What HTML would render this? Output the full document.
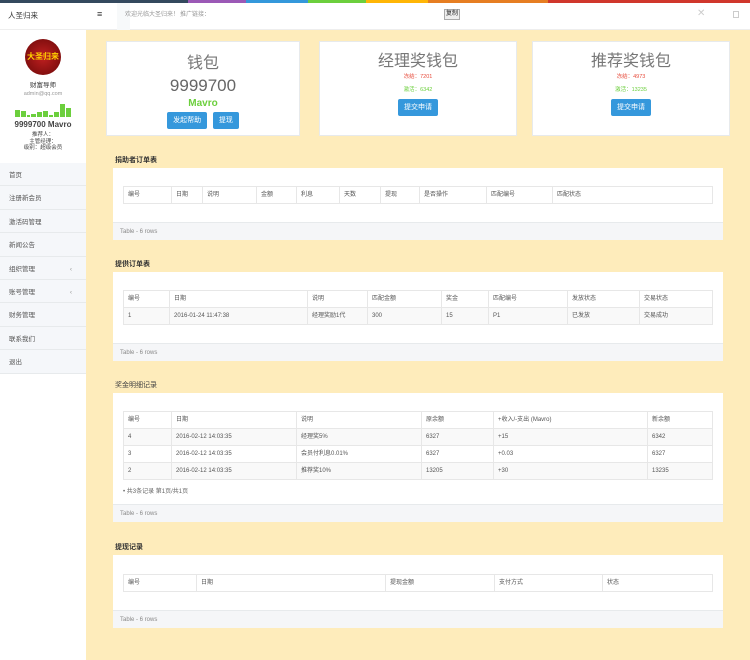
<!DOCTYPE html>
<html><head><meta charset="utf-8">
<style>
*{box-sizing:border-box;margin:0;padding:0}
body{width:750px;height:660px;overflow:hidden;background:#feecbb;font-family:"Liberation Sans","Noto Sans CJK SC",sans-serif;font-size:7px;color:#676a6c;position:relative}
.a{position:absolute}
.bar{top:0;left:0;width:750px;height:3px;display:flex}
.bar div{height:3px}
.card{background:#fff;border:1px solid #e7eaec;text-align:center}
.title{font-size:16px;line-height:18px;color:#777;font-family:"Liberation Sans","Noto Sans CJK SC",sans-serif}
.btn{display:inline-block;background:#3598dc;color:#fff;font-size:7px;line-height:9px;padding:4px 6px;border-radius:2px}
.sec{font-size:7px;font-weight:bold;color:#333;left:115px}
.panel{left:113px;width:610px;background:#fff}
.foot{position:absolute;left:0;bottom:0;width:100%;height:18px;background:#f5f6f8;border-top:1px solid #e7eaec;font-size:6px;color:#888;padding:6px 7px;line-height:7px}
table{position:absolute;left:10px;width:590px;border-collapse:collapse;table-layout:fixed;border:1px solid #e0e0e0}
td,th{border:1px solid #e7e7e7;height:17px;font-size:6px;line-height:7px;font-weight:normal;text-align:left;padding:5px 0 0 4px;color:#555;vertical-align:top;white-space:nowrap;overflow:hidden}
tr.g td{background:#f9f9f9}
.menu{left:0;width:86px;background:#f5f7fa}
.menu div{height:23.4px;border-bottom:1px solid #e7eaec;padding:9px 9px 0;line-height:7px;font-size:6.5px;color:#555;position:relative}
.menu span{position:absolute;right:14px;color:#999}
</style></head><body>
<div class="a bar"><div style="width:188px;background:#34495e"></div><div style="width:58px;background:#9b59b6"></div><div style="width:62px;background:#3498db"></div><div style="width:58px;background:#6ccf3d"></div><div style="width:62px;background:#ffb606"></div><div style="width:120px;background:#e67e22"></div><div style="width:202px;background:#d0372c"></div></div>
<div class="a" style="top:3px;left:0;width:750px;height:27px;background:#fff;border-bottom:1px solid #eee"></div>
<div class="a" style="top:3px;left:117px;width:13px;height:27px;background:#f7f9fa"></div>
<div class="a" style="top:11px;left:8px;font-size:7.5px;color:#333;line-height:9px">人圣归来</div>
<div class="a" style="top:9px;left:97px;font-size:9px;color:#333;line-height:10px">≡</div>
<div class="a" style="top:12px;left:125px;font-size:6px;color:#999;line-height:7px">欢迎光临大圣归来！</div>
<div class="a" style="top:12px;left:180px;font-size:6px;color:#999;line-height:7px">推广链接：</div>
<div class="a" style="top:9px;left:444px;width:16px;height:11px;border:1px solid #aaa;background:#eee;font-size:6px;color:#222;text-align:center;line-height:9px">复制</div>
<div class="a" style="top:8px;left:697px;font-size:10px;color:#ccc;line-height:11px">✕</div>
<div class="a" style="top:11px;left:733px;width:6px;height:7px;border:1px solid #ccc"></div>

<div class="a" style="top:30px;left:0;width:86px;height:630px;background:#fff"></div>
<div class="a" style="top:39px;left:25px;width:36px;height:36px;border-radius:50%;background:radial-gradient(circle,#c02020,#6a0808);color:#ffd000;font-size:8px;font-weight:bold;text-align:center;line-height:36px">大圣归来</div>
<div class="a" style="top:82px;left:0;width:86px;text-align:center;font-size:6.5px;color:#333;line-height:8px">财富导师</div>
<div class="a" style="top:91px;left:0;width:86px;text-align:center;font-size:5.5px;color:#999;line-height:6px">admin@qq.com</div>
<div class="a" style="top:100px;left:15px;width:57px;height:17px;display:flex;align-items:flex-end;gap:1px">
<div style="width:5px;height:7px;background:#6ccf3d"></div><div style="width:5px;height:6px;background:#6ccf3d"></div><div style="width:3px;height:2px;background:#6ccf3d"></div><div style="width:5px;height:3px;background:#6ccf3d"></div><div style="width:5px;height:5px;background:#6ccf3d"></div><div style="width:5px;height:6px;background:#6ccf3d"></div><div style="width:4px;height:2px;background:#6ccf3d"></div><div style="width:5px;height:5px;background:#6ccf3d"></div><div style="width:5px;height:13px;background:#6ccf3d"></div><div style="width:5px;height:9px;background:#6ccf3d"></div></div>
<div class="a" style="top:120px;left:0;width:86px;text-align:center;font-size:8px;color:#444;font-weight:bold;line-height:9px">9999700 Mavro</div>
<div class="a" style="top:132px;left:0;width:86px;text-align:center;font-size:5.5px;color:#444;line-height:6.5px">推荐人：<br>主管经理：<br>级别：超级会员</div>
<div class="a menu" style="top:163px"><div>首页</div><div>注册新会员</div><div>激活码管理</div><div>新闻公告</div><div>组织管理<span>‹</span></div><div>账号管理<span>‹</span></div><div>财务管理</div><div>联系我们</div><div>退出</div></div>

<div class="a card" style="top:41px;left:106px;width:194px;height:95px"><div class="title" style="margin-top:13px">钱包</div><div style="font-size:17px;line-height:19px;color:#666;margin-top:3px">9999700</div><div style="font-size:10px;color:#6ccf3d;font-weight:bold;line-height:12px;margin-top:3px">Mavro</div><div style="margin-top:2px"><span class="btn">发起帮助</span>&nbsp;&nbsp;&nbsp;<span class="btn">提现</span></div></div>
<div class="a card" style="top:41px;left:319px;width:198px;height:95px"><div class="title" style="margin-top:11px">经理奖钱包</div><div style="color:#e74c3c;font-size:5.5px;line-height:7px;margin-top:3px">冻结：7201</div><div style="color:#6ccf3d;font-size:5.5px;line-height:7px;margin-top:6px">激活：6342</div><div style="margin-top:5px"><span class="btn">提交申请</span></div></div>
<div class="a card" style="top:41px;left:532px;width:198px;height:95px"><div class="title" style="margin-top:11px">推荐奖钱包</div><div style="color:#e74c3c;font-size:5.5px;line-height:7px;margin-top:3px">冻结：4973</div><div style="color:#6ccf3d;font-size:5.5px;line-height:7px;margin-top:6px">激活：13235</div><div style="margin-top:5px"><span class="btn">提交申请</span></div></div>

<div class="a sec" style="top:155px">捐助者订单表</div>
<div class="a panel" style="top:168px;height:72px">
<table style="top:18px"><colgroup><col style="width:48px"><col style="width:31px"><col style="width:54px"><col style="width:40px"><col style="width:43px"><col style="width:41px"><col style="width:39px"><col style="width:67px"><col style="width:66px"><col></colgroup>
<tr><th>编号</th><th>日期</th><th>说明</th><th>金额</th><th>利息</th><th>天数</th><th>提现</th><th>是否操作</th><th>匹配编号</th><th>匹配状态</th></tr></table>
<div class="foot">Table - 6 rows</div></div>

<div class="a sec" style="top:259px">提供订单表</div>
<div class="a panel" style="top:272px;height:89px">
<table style="top:18px"><colgroup><col style="width:46px"><col style="width:138px"><col style="width:60px"><col style="width:74px"><col style="width:47px"><col style="width:79px"><col style="width:72px"><col></colgroup>
<tr><th>编号</th><th>日期</th><th>说明</th><th>匹配金额</th><th>奖金</th><th>匹配编号</th><th>发放状态</th><th>交易状态</th></tr>
<tr class="g"><td>1</td><td>2016-01-24 11:47:38</td><td>经理奖励1代</td><td>300</td><td>15</td><td>P1</td><td>已发放</td><td>交易成功</td></tr></table>
<div class="foot">Table - 6 rows</div></div>

<div class="a sec" style="top:380px;font-weight:normal;color:#444">奖金明细记录</div>
<div class="a panel" style="top:393px;height:129px">
<table style="top:18px"><colgroup><col style="width:48px"><col style="width:125px"><col style="width:125px"><col style="width:72px"><col style="width:154px"><col></colgroup>
<tr><th>编号</th><th>日期</th><th>说明</th><th>原余额</th><th>+收入/-支出 (Mavro)</th><th>新余额</th></tr>
<tr class="g"><td>4</td><td>2016-02-12 14:03:35</td><td>经理奖5%</td><td>6327</td><td>+15</td><td>6342</td></tr>
<tr><td>3</td><td>2016-02-12 14:03:35</td><td>会员付利息0.01%</td><td>6327</td><td>+0.03</td><td>6327</td></tr>
<tr class="g"><td>2</td><td>2016-02-12 14:03:35</td><td>推荐奖10%</td><td>13205</td><td>+30</td><td>13235</td></tr></table>
<div class="a" style="top:96px;left:10px;font-size:6px;color:#666;line-height:7px">• 共3条记录 第1页/共1页</div>
<div class="foot">Table - 6 rows</div></div>

<div class="a sec" style="top:542px">提现记录</div>
<div class="a panel" style="top:555px;height:73px">
<table style="top:19px"><colgroup><col style="width:73px"><col style="width:189px"><col style="width:109px"><col style="width:108px"><col></colgroup>
<tr><th>编号</th><th>日期</th><th>提现金额</th><th>支付方式</th><th>状态</th></tr></table>
<div class="foot">Table - 6 rows</div></div>
</body></html>
